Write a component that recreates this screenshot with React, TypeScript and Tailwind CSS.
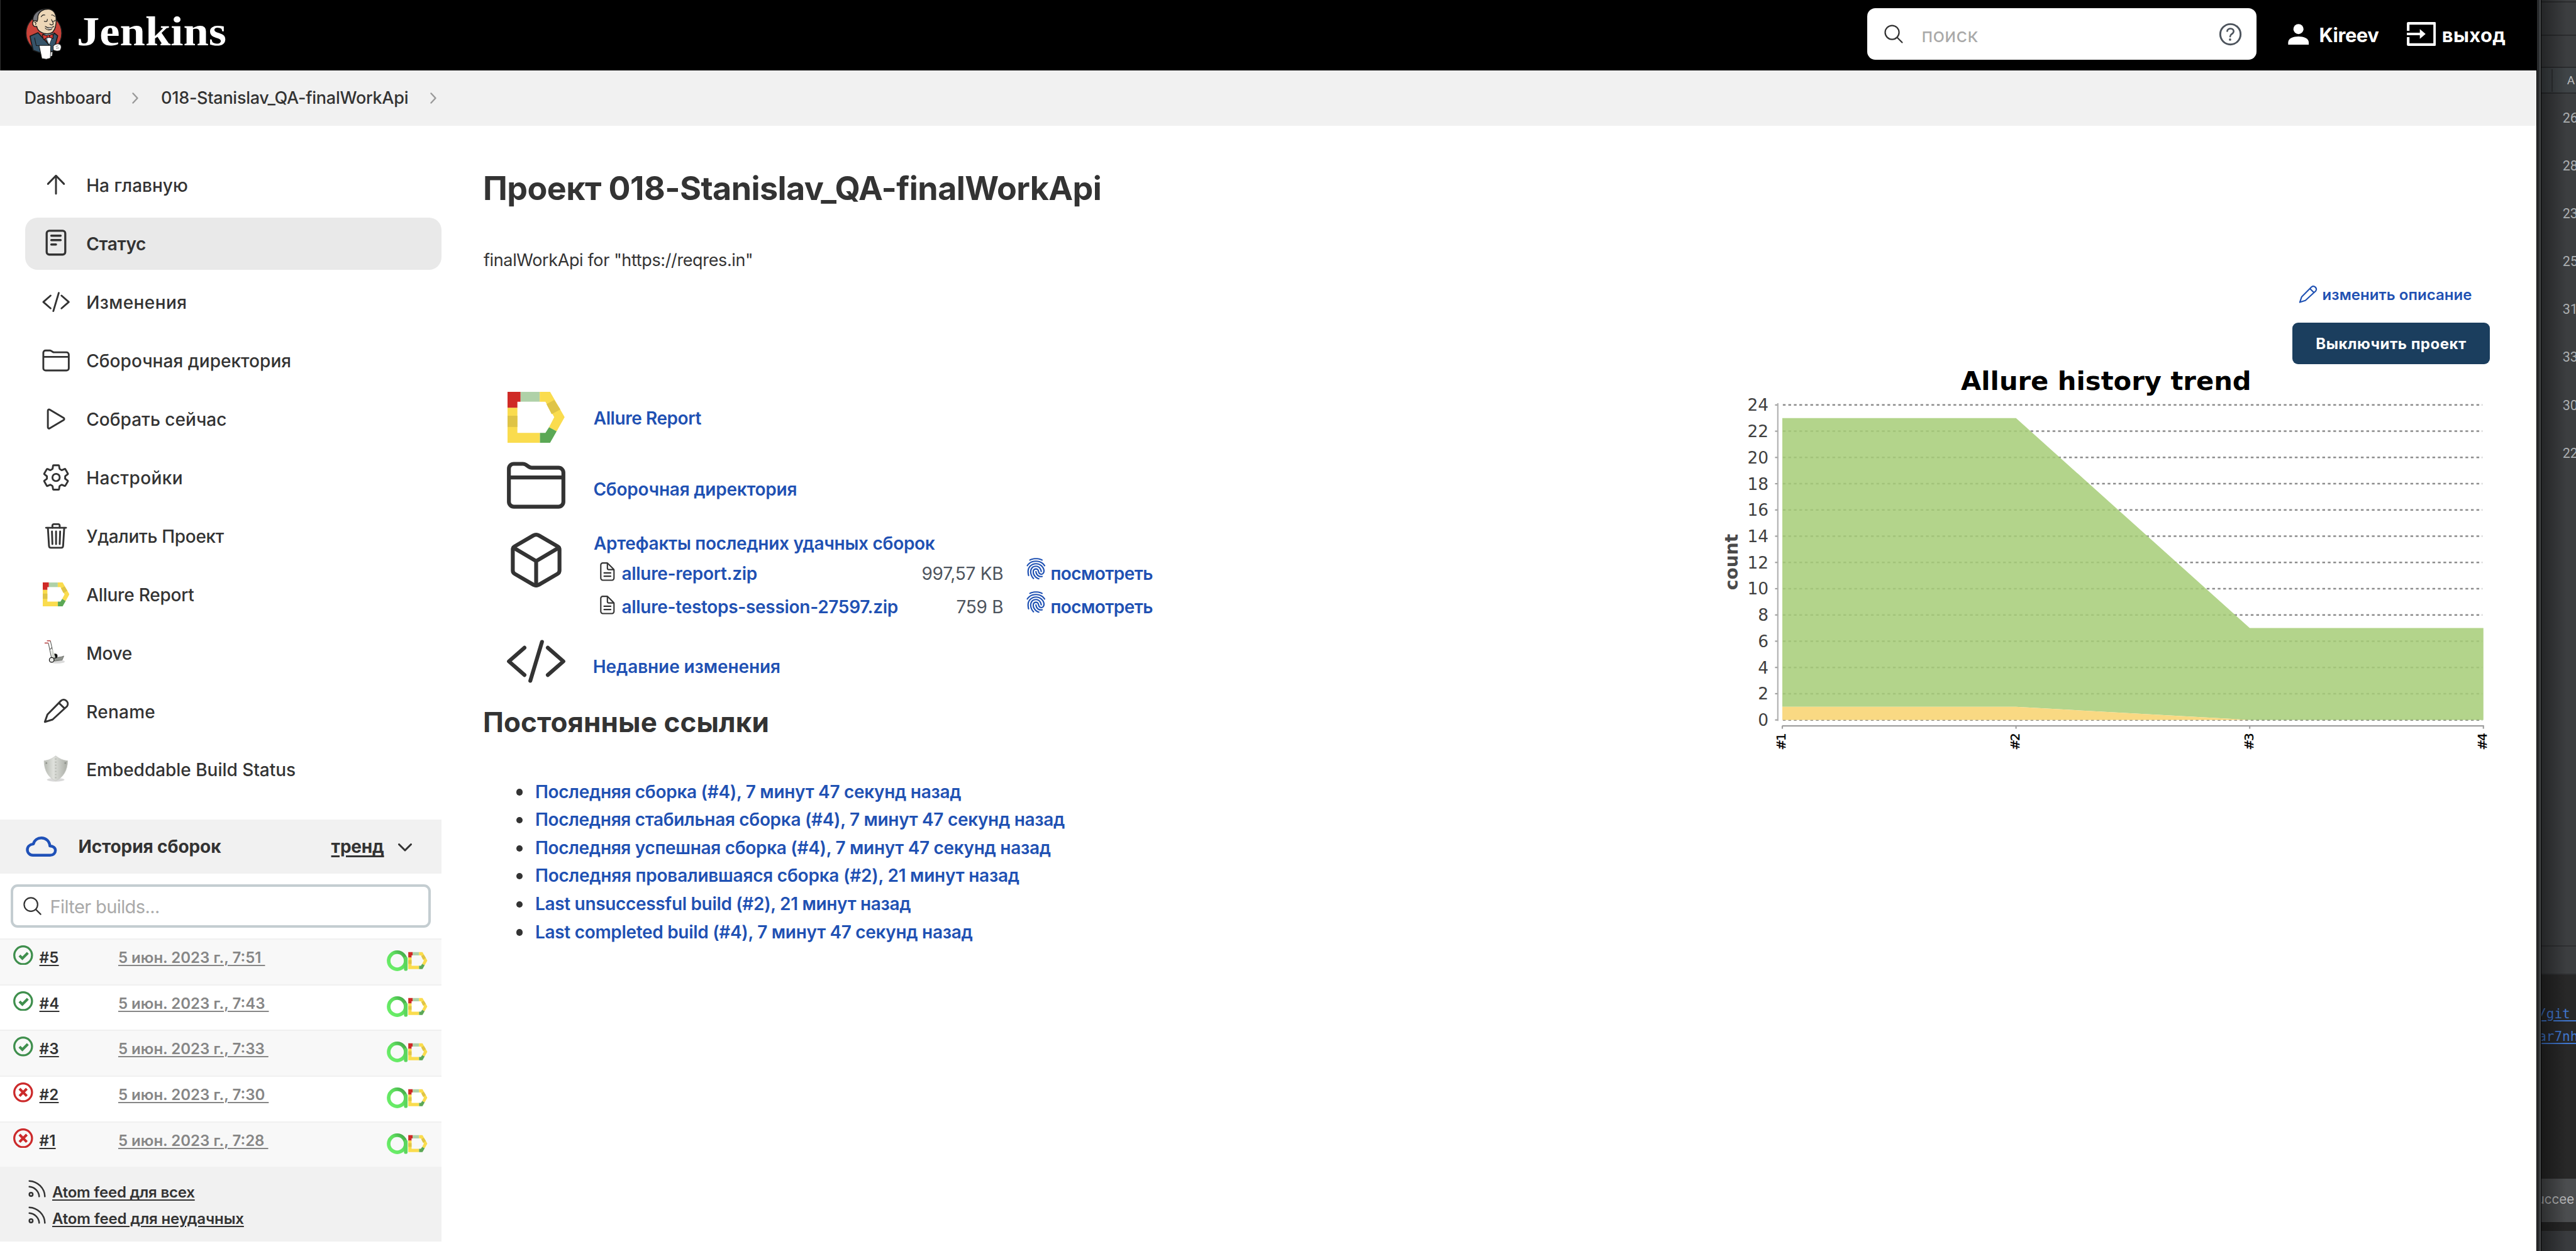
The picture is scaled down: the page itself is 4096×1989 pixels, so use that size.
import React from "react";
import {
  IoCodeSlashOutline,
  IoCubeOutline,
  IoDocumentTextOutline,
  IoFingerPrint,
  IoFolderOutline,
  IoHelpCircleOutline,
  IoPlayOutline,
  IoSearchOutline,
  IoSettingsOutline,
  IoTrashOutline,
} from "react-icons/io5";

/* ---------- icons ---------- */

function ArrowUpIcon() {
  return (
    <svg viewBox="2 2 56 56" className="size-[46px]" fill="none" stroke="currentColor" strokeWidth="3.6" strokeLinecap="round" strokeLinejoin="round">
      <path d="M14.5 28 30 12l15.5 16M30 13v34" />
    </svg>
  );
}

function StatusIcon() {
  return (
    <svg viewBox="2 2 56 56" className="size-[46px]" fill="none" stroke="currentColor" strokeWidth="4" strokeLinecap="round">
      <rect x="12" y="5.6" width="36" height="46" rx="5" />
      <path d="M21 15.2h18M21 23.7h18M21 32.2h9" strokeWidth="4.2" />
    </svg>
  );
}

function PencilIcon({ className }: { className: string }) {
  return (
    <svg viewBox="0 0 56 56" className={className} fill="none" stroke="currentColor" strokeWidth="3.6" strokeLinejoin="round">
      <path d="M6.5 48.5 11.5 34 38 7.2A8 8 0 0 1 49.3 18.3L21.5 43.8Z" />
      <path d="M33.5 11.5 45 22.6" />
    </svg>
  );
}

function TruckIcon() {
  return (
    <svg viewBox="0 0 56 56" className="size-[46px]">
      <ellipse cx="30" cy="45" rx="15" ry="3.6" fill="#000" opacity=".14" />
      <path d="M23.3 38 38.3 35.6l5-1.6L40 42l-15 2Z" fill="#8f938d" stroke="#555753" strokeWidth=".8" />
      <circle cx="26.4" cy="34" r="4.6" fill="#111" />
      <path d="M17.3 5 24 35M13.3 9l6 29M15.7 22l5-4.7" stroke="#555753" strokeWidth="1.3" fill="none" />
      <path d="M19 24l3-3 5 16-6.5 1Z" fill="#d3d7cf" />
      <path d="M10.5 4.6h7M6 9h7" stroke="#a81d1d" strokeWidth="1.5" />
      <circle cx="19.7" cy="41.6" r="4.6" fill="#e8e9e6" stroke="#111" strokeWidth="1.5" />
    </svg>
  );
}

function ShieldIcon() {
  return (
    <svg viewBox="0 0 56 56" className="size-[46px]">
      <defs>
        <linearGradient id="shield" x1="0" x2="1">
          <stop offset="0" stopColor="#b5b8b1" />
          <stop offset=".4" stopColor="#dfe1dc" />
          <stop offset="1" stopColor="#a9aca5" />
        </linearGradient>
      </defs>
      <ellipse cx="27.5" cy="48.5" rx="17" ry="3.5" fill="#000" opacity=".15" />
      <path d="M27.5 2C21 7.5 13 11 5 11.5 5 30 13 44 27.5 50.5 42 44 50.5 30 50.5 11.5 42 11 34 7.5 27.5 2Z" fill="url(#shield)" stroke="#c9cbc6" strokeWidth="1" />
      <path d="M27.5 7v40" stroke="#babdb6" strokeWidth="3" strokeDasharray="2.5 3.5" />
      <circle cx="9.5" cy="16" r="1.5" fill="#8a8d87" />
      <circle cx="46" cy="16" r="1.5" fill="#8a8d87" />
    </svg>
  );
}

function AllureShape() {
  return (
    <g>
      <path d="M19 17.6V79h43.5v19H0V30.4h19Z" fill="#fadc4e" />
      <path d="M0 46h19v21.6H0Z" fill="#dfc446" />
      <path d="M25 0h37v18.9H25Z" fill="#afd1a8" />
      <path d="M0 0h25v18.9h-6v11.5H0Z" fill="#cf2a26" />
      <path d="M62 0h20l28 48.7L94.6 76 80 68l10-19.3L73 18.9H62Z" fill="#fadc4e" />
      <path d="M75 23.7 90 15.6 101.8 34 85 43Z" fill="#dfc446" />
      <path d="M62.5 79H73l7-11 14.6 8L82 98H62.5Z" fill="#5ba855" />
    </g>
  );
}

function AllureIcon({ className }: { className: string }) {
  return (
    <svg viewBox="0 0 110 98" className={className}>
      <AllureShape />
    </svg>
  );
}

function AllureTestOpsIcon() {
  return (
    <svg viewBox="0 0 78 40" className="h-[33px] w-[64.4px]">
      <defs>
        <linearGradient id="ring" x1="0" y1="1" x2="1" y2="0">
          <stop offset="0" stopColor="#6cf06a" />
          <stop offset=".6" stopColor="#5fe05f" />
          <stop offset="1" stopColor="#3f9e45" />
        </linearGradient>
      </defs>
      <circle cx="20" cy="20" r="16.4" fill="none" stroke="url(#ring)" strokeWidth="7" />
      <path d="M36.6 16v20" stroke="#5cd65e" strokeWidth="7" strokeLinecap="round" />
      <g transform="translate(41.4 3.4) scale(.334)">
        <AllureShape />
      </g>
    </svg>
  );
}

function CloudIcon() {
  return (
    <svg viewBox="0 0 60 39" className="h-[32px] w-[49.6px]" fill="none" stroke="#1f51b8" strokeWidth="5.4" strokeLinejoin="round">
      <path d="M13.5 36.2H47c6 0 10.2-4 10.2-9 0-5.5-4.7-8.7-10.7-9C45.5 8.5 38.5 2.8 30 2.8c-7.5 0-13.5 4.2-15.5 11.7C7 15.5 2.8 20 2.8 25.5c0 6 4.7 10.7 10.7 10.7Z" />
    </svg>
  );
}

function RssIcon() {
  return (
    <svg viewBox="0 0 34 34" className="size-[28px]" fill="none" stroke="#333" strokeWidth="3" strokeLinecap="round">
      <circle cx="5.3" cy="28" r="3.3" />
      <path d="M2 13c10 .5 18.5 9 19 19M2 2c16 .5 29.5 14 30 30" />
    </svg>
  );
}

function ChevronRight() {
  return (
    <svg viewBox="0 0 10 18" className="h-[18px] w-[10px]" fill="none" stroke="#999" strokeWidth="2.4" strokeLinecap="round" strokeLinejoin="round">
      <path d="m1.5 1.5 7 7.5-7 7.5" />
    </svg>
  );
}

function BuildStatus({ ok }: { ok: boolean }) {
  return ok ? (
    <svg viewBox="-19 -19 38 38" className="size-[31.6px]" fill="none" stroke="#3f8f4d" strokeWidth="3.9">
      <circle r="17" />
      <path d="M-7 .5-1.5 6 9-4.5" strokeWidth="5" />
    </svg>
  ) : (
    <svg viewBox="-19 -19 38 38" className="size-[31.6px]" fill="none" stroke="#cc2a2b" strokeWidth="3.9">
      <circle r="17" />
      <path d="m-7-7 14 14M7-7-7 7" strokeWidth="5" />
    </svg>
  );
}

function ButlerLogo() {
  return (
    <svg viewBox="50 15 222 305" className="h-[84px] w-[61px]" strokeLinejoin="round" strokeLinecap="round">
      <ellipse cx="162" cy="163" rx="103" ry="108" fill="#cb433a" stroke="#1f1f1f" strokeWidth="5" />
      <path d="M82 180 128 160l62 68 32-66 20 16-14 52-14 38-70 10-44-16-12-50Z" fill="#36546a" stroke="#191919" strokeWidth="6" />
      <path d="M108 190l10 45h20" fill="none" stroke="#191919" strokeWidth="4" />
      <path d="M160 168l30 62 32-68Z" fill="#a9c9dd" stroke="#191919" strokeWidth="4" />
      <path d="M183 190l10 38 14-36Z" fill="#fff" />
      <path d="M128 100C108 104 98 96 98 84 100 50 130 22 178 21c10 0 20 2 26 5L140 40Z" fill="#77777c" stroke="#191919" strokeWidth="5" />
      <path d="M128 62c8-26 32-40 62-38 32 4 42 26 43 58 1 34-4 56-18 72-20 18-52 14-68 4-16-8-24-20-26-34-14 4-24-6-24-19 0-16 14-20 25-9 6-8 4-22 6-34Z" fill="#edd7b7" stroke="#191919" strokeWidth="5" />
      <path d="M146 68c6-10 14-13 22-10M206 58c8-2 14 2 18 8M164 94c6 3 12 2 17-2l1-10M212 94c6 2 12 0 16-6M206 84c4 12 12 18 10 26-4 8-14 6-20 0M170 124c14 10 36 10 50 0M170 134c10 14 30 12 38 4M108 98c8 2 10 8 6 16" fill="none" stroke="#191919" strokeWidth="4" />
      <path d="M176 128c10 6 28 6 40-2l-8 10c-10 6-22 4-32-8Z" fill="#fff" stroke="#191919" strokeWidth="2" />
      <path d="M152 170l30 8 32-10 2 26-28-8-28 14Z" fill="#d63b34" stroke="#191919" strokeWidth="4" />
      <circle cx="188" cy="181" r="8" fill="#d63b34" stroke="#191919" strokeWidth="3" />
      <path d="M134 234h68l-2 74-24 6-26-4Z" fill="#fff" stroke="#191919" strokeWidth="4" />
      <path d="M202 272h10l-2 22-10 4Z" fill="#d8d8d8" />
      <path d="M216 236c12-12 34-16 44-4 4 10 2 24-6 32-12 4-28 2-38-4Z" fill="#fff" stroke="#191919" strokeWidth="4" />
      <path d="M232 240l12-4M234 250l14-2" stroke="#555" strokeWidth="3" />
    </svg>
  );
}

/* ---------- header ---------- */

function Header() {
  return (
    <header className="flex h-[112.3px] items-start border-l border-[#333] bg-black text-white">
      <div className="ml-[37.5px] mt-[12.4px] shrink-0">
        <ButlerLogo />
      </div>
      <span className="ml-[22px] mt-[17px] origin-left scale-x-[1.1] whitespace-nowrap font-['Liberation_Serif',serif] text-[66px] leading-none font-bold">
        Jenkins
      </span>
      <div className="ml-auto flex h-[108.6px] items-center pr-[49px]">
        <div className="flex h-[82.4px] w-[619.4px] items-center rounded-[13px] bg-white">
          <IoSearchOutline className="ml-[24.5px] size-[36px] shrink-0 text-[#333]" />
          <span className="ml-[26px] pt-[2px] text-[31px] leading-none text-[#a9a9a9]">поиск</span>
          <IoHelpCircleOutline className="mr-[17.7px] ml-auto size-[47px] text-[#4d545d]" />
        </div>
        <svg viewBox="0 0 40 41" className="ml-[50px] h-[33.6px] w-[33.4px]" fill="#fff">
          <circle cx="20" cy="10" r="9.8" />
          <path d="M0 41v-5c0-8 10-11.5 20-11.5S40 28 40 36v5Z" />
        </svg>
        <span className="ml-[16px] pt-[2px] text-[31px] leading-none font-bold tracking-[-0.49px]">Kireev</span>
        <svg viewBox="0 0 56 46" className="ml-[44.5px] h-[38px] w-[46.4px]" fill="none" stroke="#fff" strokeWidth="5" strokeLinejoin="round">
          <path d="M2.5 17V2.5h51v41h-51V29M0 23h26" />
          <path d="M25 13.5 36 23 25 32.5Z" fill="#fff" stroke="none" />
        </svg>
        <span className="ml-[9.5px] pt-[2px] text-[31px] leading-none font-bold tracking-[0.31px]">выход</span>
      </div>
    </header>
  );
}

function Breadcrumbs() {
  return (
    <nav className="flex h-[87.6px] items-center bg-[#f1f1f1] pb-[1px] pl-[38.5px] text-[27px] leading-none font-medium text-[#333]">
      <span className="tracking-[-0.25px]">Dashboard</span>
      <span className="mt-[1px] ml-[33px]">
        <ChevronRight />
      </span>
      <span className="ml-[36px] tracking-[-0.27px]">018-Stanislav_QA-finalWorkApi</span>
      <span className="mt-[1px] ml-[35px]">
        <ChevronRight />
      </span>
    </nav>
  );
}

/* ---------- sidebar ---------- */

const ion = "size-[46.25px]";

const tasks = [
  { label: "На главную", icon: <ArrowUpIcon />, text: "font-medium" },
  { label: "Статус", icon: <StatusIcon />, text: "font-semibold tracking-[-0.35px]", active: true },
  { label: "Изменения", icon: <IoCodeSlashOutline className={ion} />, text: "font-medium tracking-[0.42px]" },
  { label: "Сборочная директория", icon: <IoFolderOutline className={ion} />, text: "font-medium tracking-[0.05px]" },
  { label: "Собрать сейчас", icon: <IoPlayOutline className={ion} />, text: "font-medium tracking-[0.03px]" },
  { label: "Настройки", icon: <IoSettingsOutline className={ion} />, text: "font-medium tracking-[0.4px]" },
  { label: "Удалить Проект", icon: <IoTrashOutline className={ion} />, text: "font-medium tracking-[-0.31px]" },
  { label: "Allure Report", icon: <AllureIcon className="h-[38px] w-[42.4px]" />, text: "font-medium tracking-[-0.23px]" },
  { label: "Move", icon: <TruckIcon />, text: "font-medium tracking-[-0.33px]" },
  { label: "Rename", icon: <PencilIcon className="size-[46px]" />, text: "font-medium tracking-[0.24px]" },
  { label: "Embeddable Build Status", icon: <ShieldIcon />, text: "font-medium tracking-[-0.03px]" },
];

const builds = [
  { id: "#5", time: "7:51", ok: true },
  { id: "#4", time: "7:43", ok: true },
  { id: "#3", time: "7:33", ok: true },
  { id: "#2", time: "7:30", ok: false },
  { id: "#1", time: "7:28", ok: false },
];

function Sidebar() {
  return (
    <aside className="w-[702px] shrink-0 pt-[53.3px] text-[#333]">
      <ul className="ml-[39.8px] flex flex-col gap-[10.3px] text-[28px] leading-none">
        {tasks.map((t) => (
          <li
            key={t.label}
            className={`flex h-[82.6px] items-center rounded-[20px] ${t.active ? "bg-[#e9e9e9]" : ""}`}
          >
            <span className="ml-[26.2px] flex w-[46.25px] shrink-0 justify-center">{t.icon}</span>
            <span className={`ml-[25px] pt-[2px] whitespace-nowrap ${t.text}`}>{t.label}</span>
          </li>
        ))}
      </ul>

      <section className="mt-[38.8px]">
        <div className="flex h-[86px] items-center bg-[#f1f1f1] pr-[46.8px] pl-[41.3px] text-[28px] leading-none font-bold">
          <CloudIcon />
          <span className="ml-[33.5px] tracking-[-0.1px]">История сборок</span>
          <span className="ml-auto tracking-[-0.19px] underline decoration-[2.5px] underline-offset-[4px]">тренд</span>
          <svg viewBox="0 0 22 13" className="mt-[2px] ml-[22.6px] h-[13px] w-[22px]" fill="none" stroke="#333" strokeWidth="3" strokeLinecap="round" strokeLinejoin="round">
            <path d="m1.5 1.5 9.5 9.5 9.5-9.5" />
          </svg>
        </div>

        <div className="mt-[16.4px] ml-[16.6px] flex h-[69.5px] w-[668.9px] items-center rounded-[11px] border-[4px] border-[#c4cdd1]">
          <IoSearchOutline className="ml-[13px] size-[35px]" />
          <span className="ml-[10.9px] pt-[2px] text-[29px] leading-none tracking-[-0.6px] text-[#a9a9a9]">Filter builds...</span>
        </div>

        <ul className="mt-[16.5px]">
          {builds.map((b) => (
            <li
              key={b.id}
              className="flex h-[72.7px] items-start border-t-2 border-[#f0f0f0] pl-[21.4px] text-[24px] leading-none font-semibold odd:bg-[#f8f8f8]"
            >
              <span className="mt-[9px]">
                <BuildStatus ok={b.ok} />
              </span>
              <span className="mt-[17px] ml-[9.6px] w-[125.4px]">
                <span className="tracking-[0.2px] underline decoration-2 underline-offset-[3px]">{b.id}</span>
              </span>
              <span className="mt-[17px] whitespace-pre text-[#868686] underline decoration-2 underline-offset-[3px]">
                {`5 июн. 2023 г., ${b.time}\u00a0`}
              </span>
              <span className="mt-[17.1px] mr-[22.3px] ml-auto">
                <AllureTestOpsIcon />
              </span>
            </li>
          ))}
        </ul>

        <div className="h-[118.4px] bg-[#f1f1f1] pt-[20.5px] pl-[44.6px] text-[24px] leading-none font-semibold">
          <div className="flex h-[41.3px] items-center">
            <span className="mb-[12px]">
              <RssIcon />
            </span>
            <span className="ml-[10.4px] tracking-[-0.2px] underline decoration-2 underline-offset-[3px]">Atom feed для всех</span>
          </div>
          <div className="flex h-[41.3px] items-center">
            <span className="mb-[12px]">
              <RssIcon />
            </span>
            <span className="ml-[10.4px] tracking-[-0.12px] underline decoration-2 underline-offset-[3px]">Atom feed для неудачных</span>
          </div>
        </div>
      </section>
    </aside>
  );
}

/* ---------- main ---------- */

const files = [
  { name: "allure-report.zip", size: "997,57 KB" },
  { name: "allure-testops-session-27597.zip", size: "759 B" },
];

const permalinks = [
  { label: "Последняя сборка (#4), 7 минут 47 секунд назад", spacing: "tracking-[-0.3px]" },
  { label: "Последняя стабильная сборка (#4), 7 минут 47 секунд назад", spacing: "tracking-[-0.32px]" },
  { label: "Последняя успешная сборка (#4), 7 минут 47 секунд назад", spacing: "tracking-[-0.31px]" },
  { label: "Последняя провалившаяся сборка (#2), 21 минут назад", spacing: "tracking-[-0.23px]" },
  { label: "Last unsuccessful build (#2), 21 минут назад", spacing: "tracking-[-0.33px]" },
  { label: "Last completed build (#4), 7 минут 47 секунд назад", spacing: "tracking-[-0.31px]" },
];

function ProjectInfo() {
  return (
    <div className="ml-[66px] pt-[73.8px] text-[28px] leading-none text-[#333]">
      <h1 className="text-[52px] leading-none font-bold tracking-[-0.58px] whitespace-nowrap">Проект 018-Stanislav_QA-finalWorkApi</h1>
      <p className="mt-[74.3px] ml-[1px] h-[28px] text-[27px] leading-[28px] tracking-[-0.37px]">finalWorkApi for "https://reqres.in"</p>

      <div className="mt-[186.4px] ml-[34.7px] font-semibold text-[#1f51b3]">
        <div className="flex h-[99px] items-center">
          <div className="flex w-[99px] justify-center">
            <AllureIcon className="h-[81px] w-[90.8px]" />
          </div>
          <span className="ml-[42px] pt-[2px] tracking-[-0.43px]">Allure Report</span>
        </div>
        <div className="mt-[8.5px] flex h-[99px] items-center">
          <IoFolderOutline className="size-[99px] text-[#333]" />
          <span className="mt-[14px] ml-[41.7px] tracking-[-0.24px]">Сборочная директория</span>
        </div>
        <div className="mt-[19.7px] flex items-start">
          <IoCubeOutline className="size-[99px] shrink-0 text-[#333]" />
          <div className="ml-[41.3px] pt-[9.9px]">
            <div className="ml-[1px] tracking-[-0.29px]">Артефакты последних удачных сборок</div>
            <div className="mt-[7.5px]">
              {files.map((f) => (
                <div key={f.name} className="flex h-[53px] items-center">
                  <div className="flex w-[652.3px] items-center">
                    <IoDocumentTextOutline className="mb-[8px] ml-[6.4px] size-[33.6px] text-[#333]" />
                    <span className="ml-[5.5px] tracking-[-0.3px]">{f.name}</span>
                    <span className="ml-auto font-normal tracking-[-0.25px] text-[#4d545d]">{f.size}</span>
                  </div>
                  <IoFingerPrint className="mb-[16px] ml-[33.3px] size-[36.5px]" />
                  <span className="ml-[5.4px] tracking-[-0.58px]">посмотреть</span>
                </div>
              ))}
            </div>
          </div>
        </div>
        <div className="mt-[10.3px] flex h-[99px] items-center">
          <IoCodeSlashOutline className="size-[99px] text-[#333]" />
          <span className="mt-[16px] ml-[41px] tracking-[-0.1px]">Недавние изменения</span>
        </div>
      </div>

      <h2 className="mt-[25.2px] text-[44px] leading-none font-bold tracking-[0.1px]">Постоянные ссылки</h2>
      <ul className="mt-[65.3px] ml-[52.6px] font-semibold text-[#1f51b3]">
        {permalinks.map((p) => (
          <li key={p.label} className="flex h-[44.6px] items-center whitespace-nowrap">
            <span className="mt-[3px] size-[10.3px] rounded-full bg-[#333]" />
            <span className={`ml-[20.1px] pt-[1px] ${p.spacing}`}>{p.label}</span>
          </li>
        ))}
      </ul>
    </div>
  );
}

const yTicks = [0, 2, 4, 6, 8, 10, 12, 14, 16, 18, 20, 22, 24];
const xTicks = [3432, 3882, 4332, 4782];
const yOf = (v: number) => 1386 - v * 25.27;

function TrendChart() {
  return (
    <svg viewBox="3300 701 1494 760" className="h-[627.6px] w-[1233.7px] overflow-visible font-['DejaVu_Sans',sans-serif]">
      {yTicks.map((v) => (
        <g key={v}>
          <line x1="3433" x2="4780" y1={yOf(v)} y2={yOf(v)} stroke="#8c8c8c" strokeWidth="3" strokeDasharray="5.3 5.3" />
          <line x1="3418" x2="3424" y1={yOf(v)} y2={yOf(v)} stroke="#a0a0a0" strokeWidth="2.6" />
          <text x="3405.5" y={yOf(v) + 11.5} fontSize="32" textAnchor="end" fill="#404040">
            {v}
          </text>
        </g>
      ))}
      <path d={`M3432 ${yOf(23)}H3882L4332 ${yOf(7)}H4782V1386H4332L3882 ${yOf(1)}H3432Z`} fill="#a6cd77" fillOpacity=".85" />
      <path d={`M3432 ${yOf(1)}H3882L4332 1386H3432Z`} fill="#f9d983" />
      <path d="M3423.3 776V1388" stroke="#b0b0b0" strokeWidth="2.6" />
      <path d="M3432 1397.5H4783" stroke="#a0a0a0" strokeWidth="2.6" />
      {xTicks.map((x, i) => (
        <g key={x}>
          <line x1={x} x2={x} y1="1397" y2="1403" stroke="#a0a0a0" strokeWidth="2.6" />
          <text transform={`translate(${x + 6.5} 1444) rotate(-90)`} fontSize="24" fill="#000" stroke="#000" strokeWidth=".5" textLength="33">
            {`#${i + 1}`}
          </text>
        </g>
      ))}
      <text transform="translate(3346 1136) rotate(-90)" fontSize="34" fontWeight="700" fill="#4a4a4a">
        count
      </text>
      <text x="3776" y="751" fontSize="50.5" fontWeight="700" fill="#000" textLength="559">
        Allure history trend
      </text>
    </svg>
  );
}

function ProjectActions() {
  return (
    <div className="ml-auto flex flex-col items-end pt-[251.8px] pr-[74.2px] leading-none">
      <div className="flex h-[33px] items-center pr-[28.5px] text-[24px] font-semibold text-[#1f51b3]">
        <PencilIcon className="size-[33px]" />
        <span className="ml-[7px] pt-[2px] tracking-[0.05px]">изменить описание</span>
      </div>
      <button className="mt-[27.9px] h-[66.1px] w-[314.2px] shrink-0 rounded-[9px] bg-[#1b3e5e] pt-[3px] text-[24px] leading-none font-bold tracking-[0.5px] text-white">
        Выключить проект
      </button>
      <TrendChart />
    </div>
  );
}

/* ---------- window behind on the right ---------- */

const lineNumbers = ["26", "28", "23", "25", "31", "33", "30", "22"];

function EditorSliver() {
  return (
    <div className="relative flex min-w-0 flex-1 flex-col overflow-hidden bg-[#3c3e40]">
      <div className="h-[2px]" />
      <div className="h-[55px] border-y-2 border-[#2b2c2e]" />
      <div className="h-[51px] border-b-2 border-[#2b2c2e]" />
      <div className="flex h-[41px] items-center border-b-2 border-[#2b2c2e] bg-[#3f4447]">
        <div className="ml-[16px] h-[36px] w-[2px] bg-[#2f3133]" />
        <span className="ml-[23px] font-['Roboto',sans-serif] text-[19px] leading-none text-[#bbb]">A</span>
      </div>
      <div className="pt-[1px] pl-[34px] font-['Roboto',sans-serif] text-[21.5px] leading-[76.1px] text-[#adb0b2]">
        {lineNumbers.map((n) => (
          <div key={n} className="h-[76.1px]">
            {n}
          </div>
        ))}
      </div>
      <div className="flex-1" />
      <div className="h-[47px] border-y-2 border-[#2f3032]" />
      <div className="h-[324px] bg-[#282828] pt-[43.5px] font-['DejaVu_Sans_Mono',monospace] text-[21px] leading-[36.7px] text-[#4077d0]">
        <div className="-ml-[4.5px] whitespace-nowrap underline decoration-2 underline-offset-[3px]">/git_</div>
        <div className="-ml-[4.5px] whitespace-nowrap underline decoration-2 underline-offset-[3px]">ar7nh</div>
      </div>
      <div className="h-[69px] bg-[#4b4d4f] text-[20.5px] leading-[66px] text-[#b9babb]">
        <div className="-ml-[7px] whitespace-nowrap">uccee</div>
      </div>
      <div className="h-[14px] bg-[#262626]" />
      <div className="h-[32px] bg-[#393b3e]" />
      <div className="absolute inset-y-0 left-0 w-[40px] bg-linear-to-r from-black/40 to-transparent" />
    </div>
  );
}

export default function App() {
  return (
    <div className="flex h-[1989px] w-[4096px] overflow-hidden bg-[#282828] font-['Inter',sans-serif]">
      <div className="h-[1989px] w-[4033.3px] shrink-0 overflow-hidden bg-white">
        <Header />
        <Breadcrumbs />
        <div className="flex items-start">
          <Sidebar />
          <ProjectInfo />
          <ProjectActions />
        </div>
      </div>
      <div className="flex w-[7.4px] shrink-0 border-x border-black bg-[#292b2d]">
        <div className="ml-auto w-[1.6px] bg-[#4b4d4f]" />
      </div>
      <EditorSliver />
    </div>
  );
}
